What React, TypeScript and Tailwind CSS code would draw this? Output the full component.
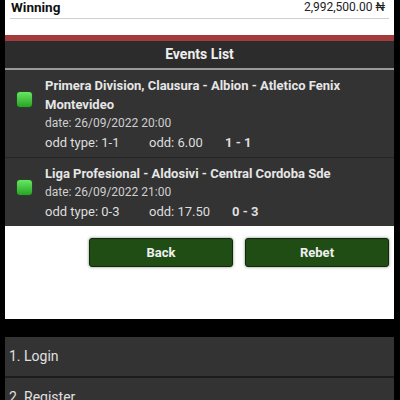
import React from "react";

const events = [
  {
    title: "Primera Division, Clausura - Albion - Atletico Fenix Montevideo",
    date: "26/09/2022 20:00",
    oddType: "1-1",
    odd: "6.00",
    score: "1 - 1",
  },
  {
    title: "Liga Profesional - Aldosivi - Central Cordoba Sde",
    date: "26/09/2022 21:00",
    oddType: "0-3",
    odd: "17.50",
    score: "0 - 3",
  },
];

export default function App() {
  return (
    <div className="w-[400px] h-[400px] overflow-hidden bg-black pl-[5px] pr-[6px] font-['Roboto',sans-serif]">
      {/* white panel */}
      <div className="bg-white">
        <div className="mx-[5px] -mt-[4px] flex h-[23px] items-center justify-between border-b border-[#cfcfcf] pl-px pr-[4px]">
          <span className="text-[13.5px] font-bold text-[#111]">Winning</span>
          <span className="text-[12px] text-[#222]">2,992,500.00 ₦</span>
        </div>
        <div className="h-[16px]"></div>
        <div className="h-[6px] bg-[#a23b3b]"></div>
        <div className="flex h-[27px] items-center justify-center bg-[#2c2c2c] text-[14px] font-bold text-[#eeeeee]">
          Events List
        </div>
        <div className="h-[2px] bg-[#9a9a9a]"></div>

        {events.map((ev, i) => (
          <div
            key={i}
            className={`flex items-start bg-[#333333] pl-[12px] pr-[8px] pt-[6px] pb-[5px] ${i > 0 ? "border-t border-[#242424]" : ""}`}
          >
            <div className="mt-[16px] h-[15px] w-[15px] shrink-0 rounded-[3px] bg-gradient-to-b from-[#66e862] to-[#26a322] shadow-[0_0_2px_#1a6a17]"></div>
            <div className="ml-[13px] flex-1 text-[#e6e6e6]">
              <div className="text-[13px] font-bold leading-[19px]">{ev.title}</div>
              <div className="text-[12px] leading-[19px] text-[#cfcfcf]">date: {ev.date}</div>
              <div className="flex text-[13px] leading-[19px] text-[#dedede]">
                <span className="w-[104px]">odd type: {ev.oddType}</span>
                <span className={i === 0 ? "w-[76px]" : "w-[83px]"}>odd: {ev.odd}</span>
                <span className="font-bold">{ev.score}</span>
              </div>
            </div>
          </div>
        ))}

        <div className="flex justify-end gap-[12px] pr-[5px] pt-[12px] pb-[52px]">
          <button className="h-[29px] w-[144px] rounded-[3px] border border-[#0f2a0a] bg-[#1f4d14] text-[13px] font-bold text-[#f0f0f0] shadow-[0_0_3px_rgba(0,0,0,0.5)]">
            Back
          </button>
          <button className="h-[29px] w-[144px] rounded-[3px] border border-[#0f2a0a] bg-[#1f4d14] text-[13px] font-bold text-[#f0f0f0] shadow-[0_0_3px_rgba(0,0,0,0.5)]">
            Rebet
          </button>
        </div>
      </div>

      {/* menu */}
      <div className="mt-[18px] flex flex-col">
        <div className="flex h-[39px] items-center bg-[#333333] pl-[4px] text-[14px] text-[#e0e0e0]">1. Login</div>
        <div className="h-[2px] bg-[#1c1c1c]"></div>
        <div className="flex h-[39px] items-center bg-[#333333] pl-[4px] text-[14px] text-[#e0e0e0]">2. Register</div>
      </div>
    </div>
  );
}
